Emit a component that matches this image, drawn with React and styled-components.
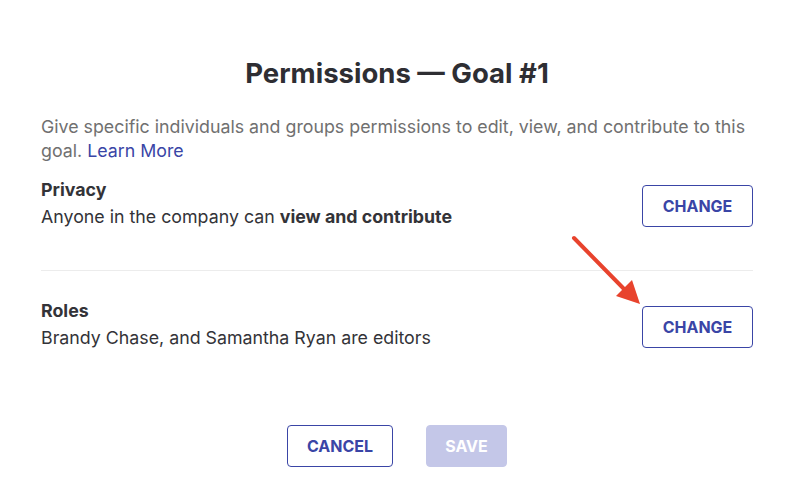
import React from "react";
import styled, { createGlobalStyle } from "styled-components";

const GlobalStyle = createGlobalStyle`
  html, body {
    margin: 0;
    padding: 0;
    background: #ffffff;
    font-family: Inter, "Liberation Sans", Arial, sans-serif;
    color: #333338;
  }
`;

const Page = styled.div`
  position: relative;
  width: 794px;
  height: 498px;
  box-sizing: border-box;
  padding: 55px 41px 0;
  overflow: hidden;
`;

const Title = styled.h1`
  margin: 0;
  font-size: 27.5px;
  line-height: 36px;
  font-weight: 700;
  text-align: center;
  color: #2e2e33;
`;

const Description = styled.p`
  margin: 24px 0 0;
  font-size: 17.8px;
  line-height: 24px;
  color: #707070;
`;

const Link = styled.a`
  color: #3a45a6;
  text-decoration: none;
`;

const Row = styled.div`
  display: flex;
  align-items: center;
  justify-content: space-between;
  margin-top: ${(p) => p.$top}px;
`;

const Info = styled.div`
  font-size: 17.8px;
  line-height: 27px;
  color: #333338;
`;

const Label = styled.div`
  font-weight: 700;
`;

const Divider = styled.hr`
  margin: 40px 0 0;
  border: 0;
  border-top: 1px solid #ececec;
`;

const OutlineButton = styled.button`
  box-sizing: border-box;
  width: ${(p) => p.$width}px;
  height: 42px;
  border: 1px solid #3a45a6;
  border-radius: 4px;
  background: #ffffff;
  color: #3a45a6;
  font-family: inherit;
  font-size: 16px;
  font-weight: 700;
  text-transform: uppercase;
  cursor: pointer;
`;

const ChangeButton = styled(OutlineButton)`
  margin-top: 5px;
`;

const SaveButton = styled(OutlineButton)`
  border-color: #c4c7e8;
  background: #c4c7e8;
  color: #ffffff;
  cursor: default;
`;

const Footer = styled.div`
  display: flex;
  justify-content: center;
  gap: 33px;
  margin-top: 74px;
`;

const Arrow = styled.svg`
  position: absolute;
  left: 566px;
  top: 230px;
`;

export default function App() {
  return (
    <>
      <GlobalStyle />
      <Page>
        <Title>Permissions — Goal #1</Title>
        <Description>
          Give specific individuals and groups permissions to edit, view, and
          contribute to this goal. <Link href="#">Learn More</Link>
        </Description>
        <Row $top={13}>
          <Info>
            <Label>Privacy</Label>
            Anyone in the company can <b>view and contribute</b>
          </Info>
          <ChangeButton $width={111}>Change</ChangeButton>
        </Row>
        <Divider />
        <Row $top={26}>
          <Info>
            <Label>Roles</Label>
            Brandy Chase, and Samantha Ryan are editors
          </Info>
          <ChangeButton $width={111}>Change</ChangeButton>
        </Row>
        <Footer>
          <OutlineButton $width={106}>Cancel</OutlineButton>
          <SaveButton $width={81} disabled>
            Save
          </SaveButton>
        </Footer>
        <Arrow width="80" height="80" viewBox="0 0 80 80">
          <line x1="8" y1="8" x2="60" y2="61" stroke="#e8432d" strokeWidth="4" strokeLinecap="round" />
          <polygon points="74,74 50,66 66,50" fill="#e8432d" />
        </Arrow>
      </Page>
    </>
  );
}
